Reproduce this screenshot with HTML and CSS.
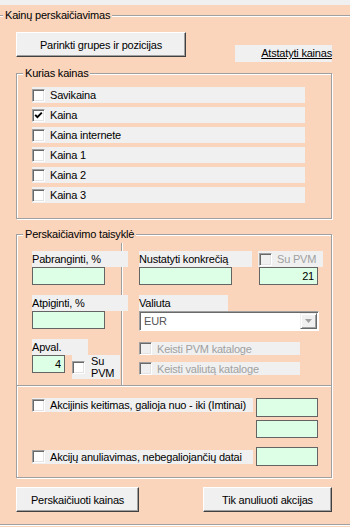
FILE: index.html
```html
<!DOCTYPE html>
<html lang="lt">
<head>
    <meta charset="UTF-8">
    <meta name="viewport" content="width=device-width, initial-scale=1.0">
    <title>Kainų perskaičiavimas</title>
    <link rel="stylesheet" href="styles.css">
</head>
<body>
    <div class="topbar"></div>
    <div class="frame">
        <div class="frame-title">Kainų perskaičiavimas</div>

        <div class="top-row">
            <button class="btn btn-pick">Parinkti grupes ir pozicijas</button>
            <a class="reset-link" href="#">Atstatyti kainas</a>
        </div>

        <div class="group">
            <div class="group-title">Kurias kainas</div>
            <div class="price-list">
                <label class="check-row"><span class="box"></span>Savikaina</label>
                <label class="check-row"><span class="box"><svg width="9" height="9" viewBox="0 0 9 9"><path d="M1.2 3.8 L3.4 6.2 L7.8 1.6" fill="none" stroke="#000" stroke-width="1.9"/></svg></span>Kaina</label>
                <label class="check-row"><span class="box"></span>Kaina internete</label>
                <label class="check-row"><span class="box"></span>Kaina 1</label>
                <label class="check-row"><span class="box"></span>Kaina 2</label>
                <label class="check-row"><span class="box"></span>Kaina 3</label>
            </div>
        </div>

        <div class="group group-rules">
            <div class="group-title">Perskaičiavimo taisyklė</div>
            <div class="rules-top">
                <div class="rules-left">
                    <div class="field-label">Pabranginti, %</div>
                    <input class="input input-left" type="text">
                    <div class="field-label">Atpiginti, %</div>
                    <input class="input input-left" type="text">
                    <div class="field-label label-short">Apval.</div>
                    <div class="round-row">
                        <input class="input input-round" type="text" value="4">
                        <label class="check-stack"><span class="box"></span><span class="stack-text">Su<br>PVM</span></label>
                    </div>
                </div>
                <div class="rules-right">
                    <div class="pair">
                        <div class="field-label label-fixed">Nustatyti konkrečią</div>
                        <label class="check-row disabled vat-check"><span class="box"></span>Su PVM</label>
                    </div>
                    <div class="pair">
                        <input class="input input-fixed" type="text">
                        <input class="input input-vat" type="text" value="21">
                    </div>
                    <div class="field-label label-currency">Valiuta</div>
                    <div class="select">
                        <span class="select-value">EUR</span>
                        <span class="drop"><svg width="7" height="4" viewBox="0 0 7 4"><path d="M0 0h7L3.5 4z" fill="#a0a0a0"/></svg></span>
                    </div>
                    <label class="check-row disabled catalog-check first"><span class="box"></span>Keisti PVM kataloge</label>
                    <label class="check-row disabled catalog-check"><span class="box"></span>Keisti valiutą kataloge</label>
                </div>
            </div>
            <div class="rules-bottom">
                <div class="promo-row">
                    <label class="check-row promo-check"><span class="box"></span>Akcijinis keitimas, galioja nuo - iki (Imtinai)</label>
                    <input class="input input-date" type="text">
                </div>
                <input class="input input-date input-date-to" type="text">
                <div class="promo-row promo-cancel">
                    <label class="check-row promo-check"><span class="box"></span>Akcijų anuliavimas, nebegaliojančių datai</label>
                    <input class="input input-date" type="text">
                </div>
            </div>
        </div>

        <div class="bottom-buttons">
            <button class="btn btn-calc">Perskaičiuoti kainas</button>
            <button class="btn btn-cancel">Tik anuliuoti akcijas</button>
        </div>
    </div>
</body>
</html>
```

FILE: styles.css
```css
* {
    margin: 0;
    padding: 0;
    box-sizing: border-box;
}

body {
    width: 350px;
    height: 527px;
    overflow: hidden;
    background: #fad5bc;
    color: #000;
    font-family: "Liberation Sans", Arial, sans-serif;
    font-size: 11px;
    letter-spacing: -0.2px;
}

.topbar {
    height: 5px;
    background: #f0f0f0;
}

/* outer group box */
.frame {
    margin-top: 10px;
    padding: 0 18px 12px 16px;
    border-top: 1px solid #a0a0a0;
    border-bottom: 1px solid #a0a0a0;
    box-shadow: inset 0 1px #fff, 0 1px #fff;
}

.frame-title {
    display: table;
    margin: -7px 0 0 -13px;
    padding: 0 2px;
    line-height: 13px;
    background: #fad5bc;
}

.top-row {
    display: flex;
    justify-content: space-between;
    align-items: flex-start;
    margin-top: 10px;
}

.btn {
    height: 25px;
    background: #f0f0f0;
    border: 1px solid;
    border-color: #fff #404040 #404040 #fff;
    box-shadow: inset -1px -1px #a0a0a0;
    font: inherit;
    letter-spacing: inherit;
    color: #000;
    cursor: pointer;
}

.btn-pick {
    width: 170px;
}

.reset-link {
    width: 97px;
    height: 17px;
    margin-top: 13px;
    line-height: 17px;
    text-align: right;
    background: #f0f0f0;
    color: #000;
    text-decoration: underline;
}

/* inner group boxes */
.group {
    margin-top: 11px;
    border: 1px solid #a0a0a0;
    box-shadow: inset 1px 1px #fff, 1px 1px #fff;
}

.group-rules {
    margin-top: 15px;
}

.group-title {
    display: table;
    margin: -7px 0 0 6px;
    padding: 0 2px;
    line-height: 13px;
    background: #fad5bc;
}

.price-list {
    display: flex;
    flex-direction: column;
    gap: 4px;
    padding: 7px 0 15px 15px;
}

.check-row {
    display: flex;
    align-items: center;
    gap: 5px;
    width: 273px;
    height: 16px;
    background: #f0f0f0;
    white-space: nowrap;
}

.box {
    flex: none;
    display: flex;
    align-items: center;
    justify-content: center;
    width: 13px;
    height: 13px;
    background: #fff;
    border: 1px solid;
    border-color: #a0a0a0 #fff #fff #a0a0a0;
    box-shadow: inset 1px 1px #696969, inset -1px -1px #e3e3e3;
}

.disabled {
    color: #a0a0a0;
}

.disabled .box {
    background: #f0f0f0;
}

/* rules block */
.rules-top {
    display: flex;
    margin-top: 2px;
    border-bottom: 1px solid #a0a0a0;
    box-shadow: 0 1px #fff;
}

.rules-left {
    width: 105px;
    padding: 8px 0 6px 15px;
    border-right: 1px solid #a0a0a0;
    box-shadow: 1px 0 #fff;
}

.field-label {
    width: 96px;
    height: 16px;
    line-height: 16px;
    background: #f0f0f0;
    white-space: nowrap;
}

.input {
    display: block;
    height: 18px;
    padding: 0 3px;
    background: #ddffe5;
    border: 1px solid #646464;
    font: inherit;
    letter-spacing: inherit;
    color: #000;
    text-align: right;
    outline: none;
}

.input-left {
    width: 73px;
    margin-bottom: 10px;
}

.label-short {
    width: 56px;
}

.round-row {
    display: flex;
    align-items: flex-start;
    gap: 7px;
}

.input-round {
    width: 33px;
}

.check-stack {
    display: flex;
    align-items: center;
    gap: 6px;
    width: 48px;
    height: 24px;
    background: #f0f0f0;
}

.stack-text {
    line-height: 12px;
}

.rules-right {
    padding: 8px 0 0 17px;
}

.pair {
    display: flex;
    gap: 6px;
}

.label-fixed {
    width: 113px;
}

.vat-check {
    width: 65px;
    padding-left: 1px;
}

.input-fixed {
    width: 93px;
}

.input-vat {
    width: 59px;
    margin-left: 21px;
}

.label-currency {
    width: 89px;
    margin-top: 10px;
}

.select {
    display: flex;
    align-items: center;
    justify-content: space-between;
    width: 180px;
    height: 20px;
    padding: 1px 1px 1px 4px;
    background: #fff;
    border: 1px solid;
    border-color: #a0a0a0 #fff #fff #a0a0a0;
    box-shadow: inset 1px 1px #696969;
    color: #555;
}

.drop {
    display: flex;
    align-items: center;
    justify-content: center;
    width: 17px;
    height: 16px;
    background: #f0f0f0;
    border: 1px solid;
    border-color: #f0f0f0 #696969 #696969 #f0f0f0;
    box-shadow: inset 1px 1px #fff, inset -1px -1px #a0a0a0;
}

.catalog-check {
    width: 161px;
    height: 13px;
    margin-top: 7px;
}

.catalog-check.first {
    margin-top: 11px;
}

.rules-bottom {
    padding: 12px 0 11px 15px;
}

.promo-row {
    display: flex;
    align-items: flex-start;
    gap: 3px;
}

.promo-check {
    width: 221px;
    height: 14px;
}

.input-date {
    width: 62px;
    height: 19px;
}

.input-date-to {
    height: 18px;
    margin: 3px 0 0 224px;
}

.promo-cancel {
    align-items: center;
    margin-top: 9px;
}

.bottom-buttons {
    display: flex;
    justify-content: space-between;
    margin-top: 9px;
}

.btn-calc {
    width: 123px;
}

.btn-cancel {
    width: 129px;
}
```
